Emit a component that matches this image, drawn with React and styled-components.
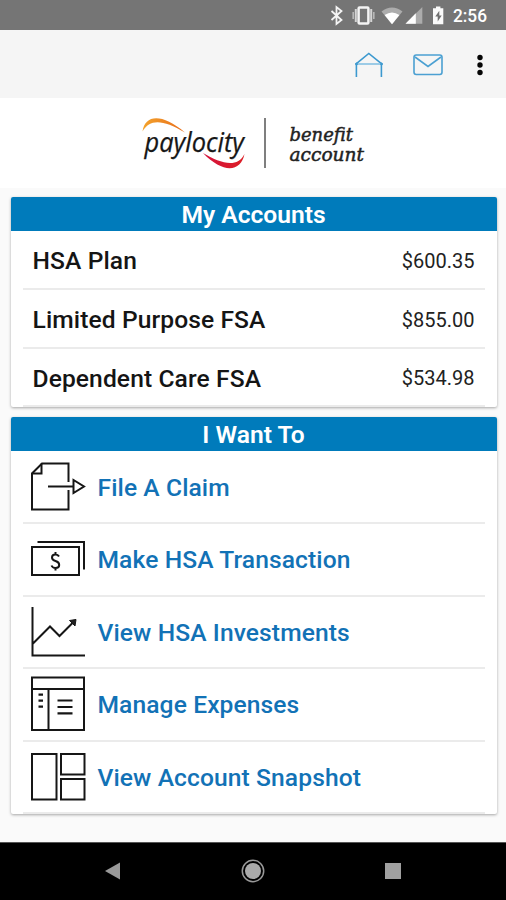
import React from "react";
import styled, { createGlobalStyle } from "styled-components";

const GlobalStyle = createGlobalStyle`
  * { box-sizing: border-box; }
  body { margin: 0; background: #fafafa; font-family: Roboto, sans-serif; }
  svg { display: block; flex: none; }
`;

const Screen = styled.div`
  width: 506px;
  height: 900px;
  display: flex;
  flex-direction: column;
  overflow: hidden;
  background: #fafafa;
`;

const StatusBar = styled.header`
  height: 30px;
  flex: none;
  display: flex;
  justify-content: flex-end;
  background: #757575;
`;

const Toolbar = styled.nav`
  height: 68px;
  flex: none;
  display: flex;
  align-items: center;
  justify-content: flex-end;
  padding-right: 4px;
  background: #f5f5f5;
`;

const IconButton = styled.button`
  width: ${(p) => p.$width}px;
  height: 68px;
  padding: 1px 0 0;
  border: 0;
  background: none;
  display: flex;
  align-items: center;
  justify-content: center;
`;

const Brand = styled.section`
  height: 90px;
  flex: none;
  display: flex;
  justify-content: center;
  background: #fff;
`;

const Content = styled.main`
  flex: 1;
  display: flex;
  flex-direction: column;
  gap: 10px;
  padding: 9px 9.5px 0 10.5px;
`;

const Card = styled.section`
  background: #fff;
  border-radius: 2px;
  overflow: hidden;
  box-shadow: 0 1px 3px rgba(0, 0, 0, 0.34);
`;

const CardTitle = styled.h2`
  margin: 0;
  height: 34px;
  line-height: 36px;
  text-align: center;
  color: #fff;
  background: #007bbb;
  font-size: 24.6px;
  font-weight: 600;
`;

const List = styled.ul`
  list-style: none;
  margin: 0;
  padding: 0 12px;
`;

const AccountRow = styled.li`
  height: 58.8px;
  padding: 3px 10px 0;
  display: flex;
  align-items: center;
  justify-content: space-between;
  border-bottom: 2px solid #ebebeb;
`;

const AccountName = styled.span`
  font-size: 24.6px;
  font-weight: 500;
  color: #151515;
  letter-spacing: 0.1px;
`;

const Amount = styled.span`
  font-size: 20px;
  color: #222;
`;

const ActionRow = styled.li`
  height: 72.6px;
  padding-left: 7.5px;
  display: flex;
  align-items: center;
  gap: 11.5px;
  border-bottom: 2px solid #ebebeb;
`;

const ActionLabel = styled.span`
  padding-top: 1px;
  font-size: 24.6px;
  font-weight: 500;
  color: #1272b6;
  letter-spacing: 0.1px;
`;

const SystemNav = styled.footer`
  height: 58px;
  flex: none;
  display: flex;
  justify-content: center;
  gap: 112px;
  align-items: center;
  background: #000;
  border-top: 1px solid #555;
`;

function StatusIcons() {
  return (
    <svg width="186" height="30" viewBox="320 0 186 30">
      <path d="M331.5 11l10 9-5 4V7l5 4-10 9" fill="none" stroke="#f4f4f4" strokeWidth="1.8" />
      <g fill="none" stroke="#f4f4f4">
        <rect x="358.6" y="7.4" width="9.8" height="16.2" rx="1" strokeWidth="2.5" />
        <path d="M355.8 9v13M371.2 9v13" stroke="#d4d4d4" strokeWidth="2" />
        <path d="M353.2 12v7M373.8 12v7" stroke="#b8b8b8" strokeWidth="1.6" />
      </g>
      <path d="M381.5 11.5Q392 3.5 402.5 11.5L392 24.3Z" fill="#acacac" />
      <path d="M384.6 15Q392 10 399.4 15L392 24.3Z" fill="#fff" />
      <path d="M405.5 23.7L422.3 7v16.7Z" fill="#acacac" />
      <path d="M405.5 23.7L415.8 13.3v10.4Z" fill="#fff" />
      <path d="M433 8.2h3V6.5h4.4v1.7h2.9v16H433Z" fill="#fafafa" />
      <path d="M439.3 10.8l-4 5.8h2.4v4.8l4-6h-2.4Z" fill="#707070" />
      <text x="453" y="22.4" textLength="34" lengthAdjust="spacingAndGlyphs" fontFamily="Roboto, sans-serif" fontSize="18.5" fontWeight="500" fill="#fff">2:56</text>
    </svg>
  );
}

function HomeIcon() {
  return (
    <svg width="30" height="26" viewBox="0 0 30 26" fill="none" stroke="#3c99cf">
      <path d="M2.4 25V11.7L14.8 1.5l12.6 10.2V25" strokeWidth="1.6" />
      <path d="M2 12h26" stroke="#9ccbe6" strokeWidth="2" />
      <circle cx="2.5" cy="12" r="1" fill="#3c99cf" />
      <circle cx="27.5" cy="12" r="1" fill="#3c99cf" />
    </svg>
  );
}

function MailIcon() {
  return (
    <svg width="30" height="22" viewBox="0 0 30 22" fill="none" stroke="#4ba0d2" strokeWidth="1.6">
      <rect x="1" y="1" width="28" height="19.5" rx="2.2" />
      <path d="M2 3l13 9.5L28 3" />
    </svg>
  );
}

function MoreIcon() {
  return (
    <svg width="8" height="22" viewBox="0 0 8 22" fill="#050505">
      <circle cx="4" cy="3.5" r="2.7" />
      <circle cx="4" cy="11" r="2.7" />
      <circle cx="4" cy="18.5" r="2.7" />
    </svg>
  );
}

function Logo() {
  return (
    <svg width="236" height="90" viewBox="135 98 236 90">
      <defs>
        <linearGradient id="arcOrange">
          <stop offset="0" stopColor="#f3a32c" />
          <stop offset="1" stopColor="#e86d1b" />
        </linearGradient>
        <linearGradient id="arcRed">
          <stop offset="0" stopColor="#d5123c" />
          <stop offset="1" stopColor="#dc1f26" />
        </linearGradient>
      </defs>
      <path d="M142.5 131.5C145 114.5 162 113 185 132.5C163 119.5 150 118.5 142.5 131.5Z" fill="url(#arcOrange)" />
      <path d="M203 153C220 163 237 169 244.5 154C241 172 223 174 203 153Z" fill="url(#arcRed)" />
      <text x="144.5" y="151.7" textLength="99.5" lengthAdjust="spacingAndGlyphs" fontFamily="Open Sans, sans-serif" fontStyle="italic" fontSize="27" fill="#161616" stroke="#161616" strokeWidth="0.25">paylocity</text>
      <path d="M265 118v50" stroke="#555" strokeWidth="1.5" />
      <g fontFamily="DejaVu Serif, serif" fontStyle="italic" fontSize="19" fill="#222" stroke="#222" strokeWidth="0.5">
        <text x="289.5" y="141" textLength="63.5" lengthAdjust="spacingAndGlyphs">benefit</text>
        <text x="289.5" y="161" textLength="74.5" lengthAdjust="spacingAndGlyphs">account</text>
      </g>
    </svg>
  );
}

const ActionIcon = ({ children }) => (
  <svg width="56" height="56" viewBox="0 0 56 56" fill="none" stroke="#161616" strokeWidth="2">
    {children}
  </svg>
);

const ClaimIcon = () => (
  <ActionIcon>
    <path d="M38.5 23V4.5H12L2 14.5V50.5H38.5V31" />
    <path d="M2 14.5H11.5V4.5M18 27.5H44M43.5 21V34L54 27.5Z" />
  </ActionIcon>
);

const MoneyIcon = () => (
  <ActionIcon>
    <rect x="2" y="16" width="47" height="28" />
    <path d="M7.5 11H54V38.5" />
    <path d="M29 25.5Q28 23.5 25.3 23.5Q22 23.5 22 26.5Q22 29 25.5 30Q29.2 31 29.2 34Q29.2 37 25.5 37Q22.5 37 21.5 34.5M25.5 21V24M25.5 37V39.5" />
  </ActionIcon>
);

const ChartIcon = () => (
  <ActionIcon>
    <path d="M2.5 3V51.5H55M3 39.5L20 22.5L29.5 32L43 18.5" />
    <path d="M39.5 16.5L46 15.5L45 22Z" fill="#222" strokeWidth="1" />
  </ActionIcon>
);

const ExpensesIcon = () => (
  <ActionIcon>
    <path d="M2 1.5H54V54H2ZM2 13H54M18.5 13V54" />
    <path d="M8.5 18.7h4.5M8.5 24.7h4.5M8.5 30.7h4.5" strokeWidth="2.3" />
    <path d="M27.5 24.5H42.5M27.5 31H42.5M27.5 37.3H42.5" strokeWidth="2.2" />
  </ActionIcon>
);

const SnapshotIcon = () => (
  <ActionIcon>
    <rect x="2" y="5" width="24.5" height="45.5" />
    <rect x="31" y="5" width="23.5" height="20.5" />
    <rect x="31" y="30" width="23.5" height="20.5" />
  </ActionIcon>
);

const accounts = [
  ["HSA Plan", "$600.35"],
  ["Limited Purpose FSA", "$855.00"],
  ["Dependent Care FSA", "$534.98"],
];

const actions = [
  [ClaimIcon, "File A Claim"],
  [MoneyIcon, "Make HSA Transaction"],
  [ChartIcon, "View HSA Investments"],
  [ExpensesIcon, "Manage Expenses"],
  [SnapshotIcon, "View Account Snapshot"],
];

export default function App() {
  return (
    <Screen>
      <GlobalStyle />
      <StatusBar><StatusIcons /></StatusBar>
      <Toolbar>
        <IconButton $width={60} aria-label="Home"><HomeIcon /></IconButton>
        <IconButton $width={58} aria-label="Messages"><MailIcon /></IconButton>
        <IconButton $width={45} aria-label="More"><MoreIcon /></IconButton>
      </Toolbar>
      <Brand><Logo /></Brand>
      <Content>
        <Card>
          <CardTitle>My Accounts</CardTitle>
          <List>
            {accounts.map(([name, amount]) => (
              <AccountRow key={name}>
                <AccountName>{name}</AccountName>
                <Amount>{amount}</Amount>
              </AccountRow>
            ))}
          </List>
        </Card>
        <Card>
          <CardTitle>I Want To</CardTitle>
          <List>
            {actions.map(([Icon, label]) => (
              <ActionRow key={label}>
                <Icon />
                <ActionLabel>{label}</ActionLabel>
              </ActionRow>
            ))}
          </List>
        </Card>
      </Content>
      <SystemNav>
        <svg width="28" height="28" viewBox="0 0 28 28"><path d="M6 13L21 4.5V21.5Z" fill="#999" /></svg>
        <svg width="28" height="28" viewBox="0 0 28 28">
          <circle cx="14" cy="13" r="8" fill="#aaa" />
          <circle cx="14" cy="13" r="10.7" fill="none" stroke="#999" strokeWidth="1.5" />
        </svg>
        <svg width="28" height="28" viewBox="0 0 28 28"><rect x="6" y="5" width="16" height="16" fill="#a0a0a0" /></svg>
      </SystemNav>
    </Screen>
  );
}
